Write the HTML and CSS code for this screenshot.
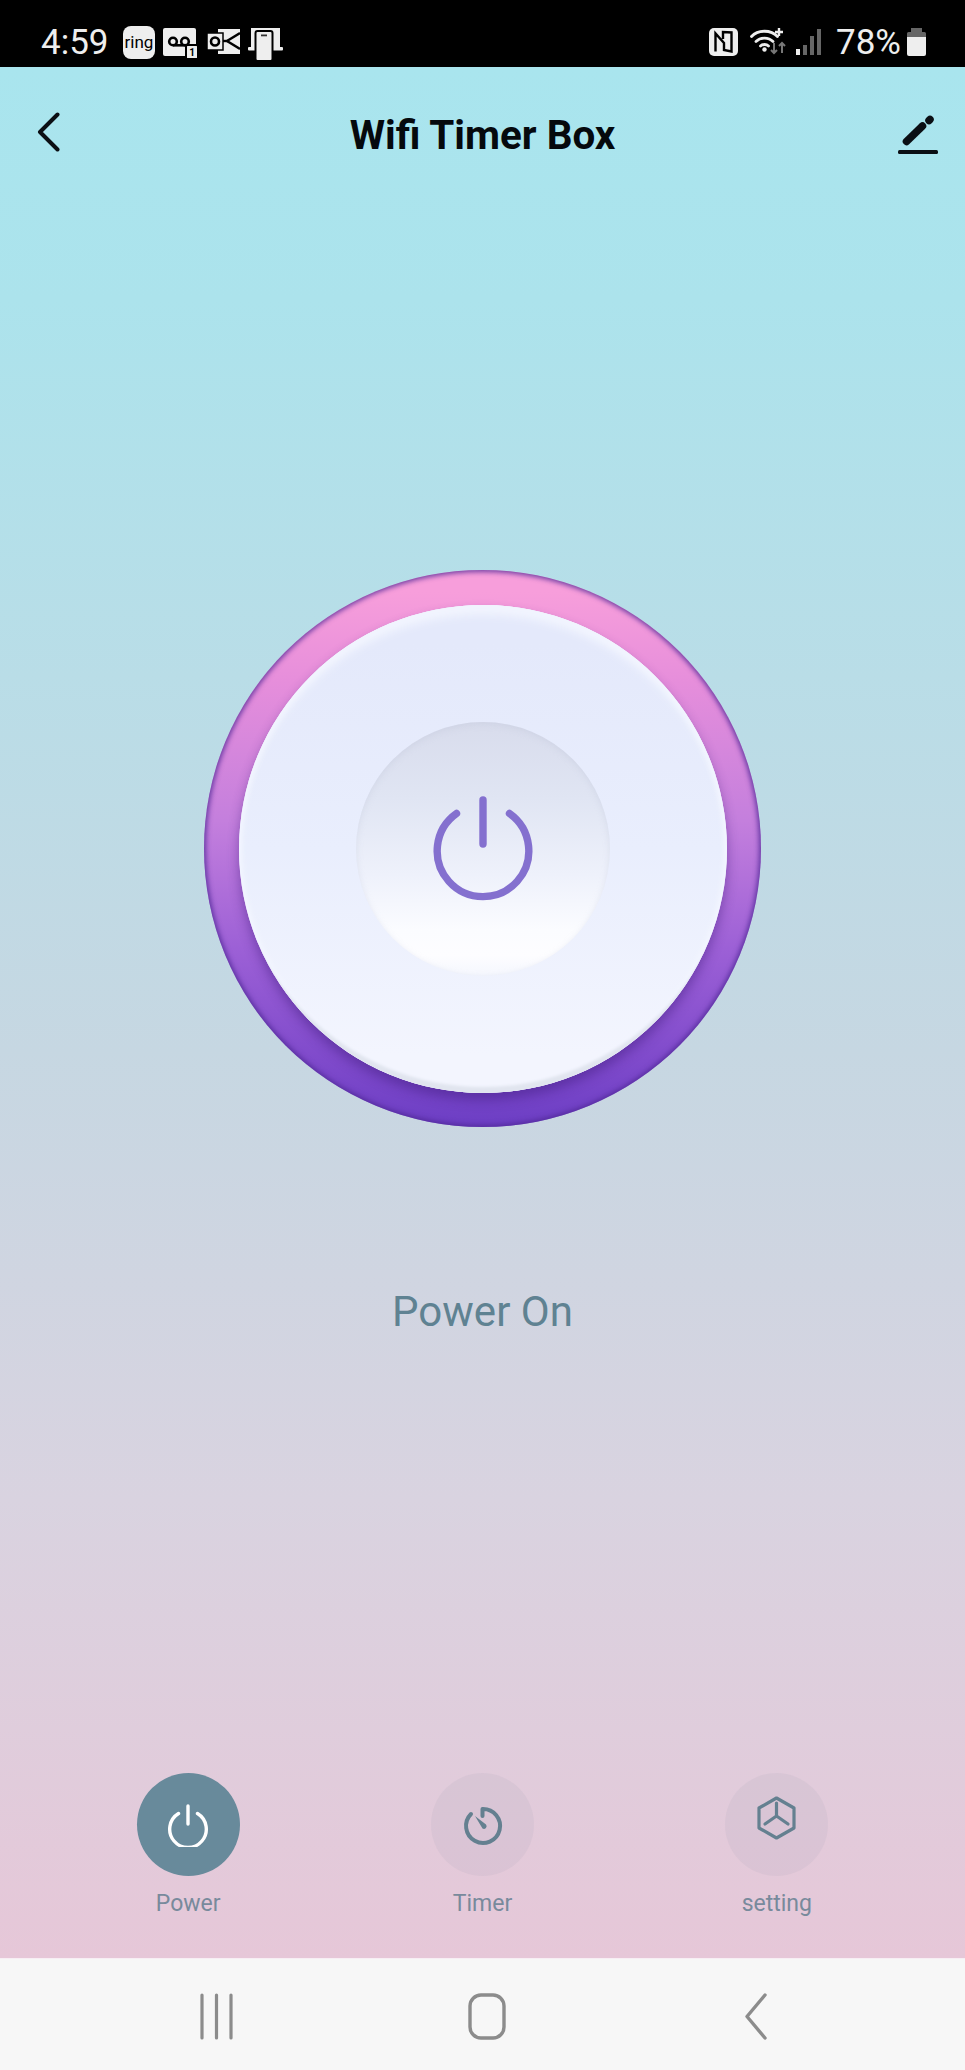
FILE: index.html
```html
<!doctype html>
<html lang="en">
<head>
  <meta charset="UTF-8">
  <title>Wifi Timer Box</title>
  <link rel="stylesheet" href="styles.css">
</head>
<body>
  <div class="app">
    <div class="status-bar">
      <div class="status-group status-left">
        <span class="clock">4:59</span>
        <svg class="st-ring" viewBox="0 0 32 38"><rect y="3" width="32" height="33" rx="8" fill="#eee"/><text class="ring-text" x="16" y="25" text-anchor="middle">ring</text></svg>
        <svg class="st-vm" viewBox="0 0 36 38">
          <rect y="5" width="33" height="28" rx="2" fill="#eee"/>
          <g fill="none" stroke="#000" stroke-width="2.6"><circle cx="10" cy="18.500" r="3.800"/><circle cx="22" cy="18.500" r="3.800"/><path d="M10 22.300H22"/></g>
          <rect x="23" y="22" width="12" height="14" rx="1.500" fill="#eee" stroke="#000" stroke-width="2"/>
          <text class="vm-count" x="29" y="33" text-anchor="middle">1</text>
        </svg>
        <svg class="st-mail" viewBox="0 0 33 38">
          <rect x="11" y="6" width="22" height="25" fill="#eee"/>
          <path d="M33 10L20 18L33 26" fill="none" stroke="#000" stroke-width="2.400"/>
          <path d="M16 18H22" stroke="#000" stroke-width="2.400"/>
          <rect x="0" y="10" width="16" height="17" fill="#eee" stroke="#000" stroke-width="1.500"/>
          <circle cx="8" cy="18.500" r="4" fill="none" stroke="#000" stroke-width="2.600"/>
        </svg>
        <svg class="st-phone" viewBox="0 0 35 38">
          <rect x="3" y="5" width="29" height="21" fill="#eee"/>
          <rect x="0" y="24" width="35" height="3.400" rx="1" fill="#eee"/>
          <rect x="7.500" y="8" width="17" height="30" rx="2" fill="#eee" stroke="#000" stroke-width="2"/>
          <rect x="13" y="11.500" width="6" height="1.800" fill="#333"/>
        </svg>
      </div>
      <div class="status-group status-right">
        <svg class="st-nfc" viewBox="0 0 29 38">
          <rect y="5" width="29" height="28" rx="5" fill="#eee"/>
          <path d="M6.500 28.500V10.500L15 20V27L22.500 28.500V9.500L14 9V16" fill="none" stroke="#000" stroke-width="2.400"/>
        </svg>
        <svg class="st-wifi" viewBox="0 0 36 38">
          <g fill="none" stroke="#eee" stroke-width="2.800" stroke-linecap="round">
            <path d="M1.500 13.500C8 6.500 21 6.500 27.500 13.500"/>
            <path d="M6 18.500C10.500 14 18.500 14 23 18.500"/>
            <path d="M10.500 23C12.500 21 16.500 21 18.500 23"/>
          </g>
          <circle cx="14.500" cy="26.500" r="2.200" fill="#eee"/>
          <path d="M29 5V13M25 9H33" stroke="#eee" stroke-width="2.400"/>
          <g fill="none" stroke="#777" stroke-width="2"><path d="M24 20V30M21 27L24 30L27 27"/><path d="M32 30V20M29 23L32 20L35 23"/></g>
        </svg>
        <svg class="st-signal" viewBox="0 0 26 38">
          <rect x="0" y="26" width="4" height="6" fill="#eee"/>
          <rect x="7" y="22" width="4" height="10" fill="#666"/>
          <rect x="14" y="13" width="4" height="19" fill="#666"/>
          <rect x="21" y="6" width="4" height="26" fill="#666"/>
        </svg>
        <span class="battery-text">78%</span>
        <svg class="st-battery" viewBox="0 0 19 38">
          <path d="M4 5H15V9H17.500A1.500 1.500 0 0 1 19 10.500V14H0V10.500A1.500 1.500 0 0 1 1.500 9H4Z" fill="#666"/>
          <path d="M0 14H19V31A2 2 0 0 1 17 33H2A2 2 0 0 1 0 31Z" fill="#eee"/>
        </svg>
      </div>
    </div>

    <header class="header">
      <svg class="back-icon" viewBox="0 0 23 40"><path d="M20.500 2.500L3 20L20.500 37.500" fill="none" stroke="#0b0f14" stroke-width="4" stroke-linecap="round" stroke-linejoin="round"/></svg>
      <h1 class="title">Wifi Timer Box</h1>
      <svg class="edit-icon" viewBox="0 0 40 40"><g fill="none" stroke="#0b0f14" stroke-width="7.500" stroke-linecap="round"><path d="M8.500 27.500L24.500 12"/><path d="M31 6.500L32 5.500"/></g><rect y="36" width="40" height="4" rx="1.500" fill="#0b0f14"/></svg>
    </header>

    <main class="main">
      <div class="dial">
        <div class="plate">
          <div class="dish">
            <svg class="dish-icon" viewBox="0 0 100 105"><g fill="none" stroke="#8470cf" stroke-width="7.400" stroke-linecap="round"><path d="M23.500 17.500A45.800 45.800 0 1 0 76.500 17.500"/><path d="M50 4V48"/></g></svg>
          </div>
        </div>
      </div>
      <p class="power-state">Power On</p>
    </main>

    <nav class="tabs">
      <div class="tab">
        <div class="tab-circle active">
          <svg class="tab-icon" viewBox="0 0 44 44"><g fill="none" stroke="#fff" stroke-width="3.400" stroke-linecap="round"><path d="M12.500 10.500A18.300 18.300 0 1 0 31.500 10.500"/><path d="M22 3V21"/></g></svg>
        </div>
        <span class="tab-label">Power</span>
      </div>
      <div class="tab">
        <div class="tab-circle">
          <svg class="tab-icon timer" viewBox="0 0 44 44">
            <g fill="none" stroke="#648090" stroke-width="4" stroke-linecap="round" stroke-linejoin="round"><path d="M10 10A17 17 0 1 0 21.500 5V12"/></g>
            <path d="M14 12L25 20.500A2.700 2.700 0 0 1 21.500 24.500Z" fill="#648090"/>
          </svg>
        </div>
        <span class="tab-label">Timer</span>
      </div>
      <div class="tab">
        <div class="tab-circle">
          <svg class="tab-icon setting" viewBox="0 0 44 44"><g fill="none" stroke="#648090" stroke-width="3.200" stroke-linecap="round" stroke-linejoin="round"><path d="M21.500 2L39 12V32L21.500 42L4 32V12Z"/><path d="M21.500 7V20L10 28M21.500 20L33 28"/></g></svg>
        </div>
        <span class="tab-label">setting</span>
      </div>
    </nav>

    <div class="nav-bar">
      <svg class="nav-recent" viewBox="0 0 33 47"><g stroke="#8c8c8c" stroke-width="3.200" stroke-linecap="round"><path d="M2 2V45M16.500 2V45M31 2V45"/></g></svg>
      <svg class="nav-home" viewBox="0 0 38 47"><rect x="2" y="2" width="34" height="43" rx="11" fill="none" stroke="#8c8c8c" stroke-width="3.400"/></svg>
      <svg class="nav-back" viewBox="0 0 22 47"><path d="M20 2L2 23.500L20 45" fill="none" stroke="#8c8c8c" stroke-width="3.400" stroke-linecap="round" stroke-linejoin="round"/></svg>
    </div>
  </div>
</body>
</html>
```

FILE: styles.css
```css
* {
  box-sizing: border-box;
}
html, body {
  margin: 0;
  padding: 0;
}
body {
  font-family: 'Roboto', sans-serif;
  background: #000;
}
.app {
  width: 965px;
  height: 2070px;
  display: flex;
  flex-direction: column;
  overflow: hidden;
  background: linear-gradient(180deg, #a9e5ee 67px, #ace3ec 300px, #c6d7e2 1050px, #d9d3e0 1500px, #e6c7d8 1958px);
}

/* status bar */
.status-bar {
  height: 67px;
  flex: none;
  background: #000;
  color: #eee;
  padding: 17px 39px 0 41px;
  display: flex;
  justify-content: space-between;
  align-items: flex-start;
}
.status-group {
  display: flex;
  align-items: center;
  height: 50px;
}
.status-group svg {
  height: 38px;
  flex: none;
}
.status-left {
  gap: 8px;
}
.clock {
  font-size: 35px;
  line-height: 38px;
  margin: 1px 6px 0 0;
}
.st-ring { width: 32px; }
.st-vm { width: 36px; }
.st-mail { width: 33px; }
.st-phone { width: 35px; }
.st-nfc { width: 29px; margin-right: 12px; }
.st-wifi { width: 36px; margin-right: 10px; }
.st-signal { width: 26px; margin-right: 14px; }
.st-battery { width: 19px; margin-left: 6px; }
.battery-text {
  font-size: 35px;
  line-height: 38px;
  margin-top: 1px;
}
.ring-text {
  font-family: 'Roboto', sans-serif;
  font-size: 17px;
  fill: #000;
}
.vm-count {
  font-family: 'Roboto', sans-serif;
  font-size: 10px;
  font-weight: 700;
  fill: #000;
}

/* header */
.header {
  height: 134px;
  flex: none;
  padding: 0 27px 4px 37px;
  display: grid;
  grid-template-columns: 1fr auto 1fr;
  align-items: center;
}
.back-icon {
  width: 23px;
  height: 40px;
}
.edit-icon {
  width: 40px;
  height: 40px;
  justify-self: end;
  margin-top: 4px;
}
.title {
  margin: 8px 0 0 -10px;
  font-size: 40.4px;
  font-weight: 700;
  line-height: 48px;
  color: #05090d;
}

/* main dial */
.main {
  flex: 1;
  padding-top: 369px;
  display: flex;
  flex-direction: column;
  align-items: center;
}
.dial {
  width: 557px;
  height: 557px;
  flex: none;
  border-radius: 50%;
  display: flex;
  align-items: center;
  justify-content: center;
  background: linear-gradient(180deg, #f79edb 4%, #e68edb 20%, #c47fdd 45%, #9c60d6 68%, #7f4acb 88%, #6c3ec4 100%);
  box-shadow: inset 0 0 5px 2px rgba(80, 40, 150, 0.8);
}
.plate {
  width: 488px;
  height: 488px;
  border-radius: 50%;
  display: flex;
  align-items: center;
  justify-content: center;
  background: linear-gradient(180deg, #e4e9fb 8%, #e9eefd 50%, #f3f5fe 92%);
  box-shadow: 0 7px 12px rgba(60, 25, 120, 0.45), inset 0 16px 8px -6px #f1f4fe, inset 0 -12px 3px -6px #e1e5ef, inset 0 0 5px 3px #f3f6ff;
}
.dish {
  width: 254px;
  height: 254px;
  border-radius: 50%;
  display: flex;
  align-items: center;
  justify-content: center;
  background: linear-gradient(180deg, #d8dcec 0%, #e0e5f3 30%, #eef1fb 60%, #fbfcff 82%, #fdfdff 92%, #f5f7fe 100%);
  box-shadow: inset 0 2px 6px rgba(190, 195, 215, 0.35);
}
.dish-icon {
  width: 100px;
  height: 105px;
}
.power-state {
  margin: 155px 0 0;
  font-size: 42px;
  line-height: 60px;
  color: #5f8292;
}

/* bottom tabs */
.tabs {
  flex: none;
  padding: 0 41px 40px;
  display: grid;
  grid-template-columns: repeat(3, 1fr);
}
.tab {
  display: flex;
  flex-direction: column;
  align-items: center;
  gap: 14px;
}
.tab-circle {
  width: 103px;
  height: 103px;
  border-radius: 50%;
  background: rgba(176, 166, 186, 0.16);
  display: flex;
  align-items: center;
  justify-content: center;
}
.tab-circle.active {
  background: #688a9b;
}
.tab-icon {
  width: 44px;
  height: 44px;
}
.tab-icon.timer {
  margin: 2px 0 0 1px;
}
.tab-icon.setting {
  margin-top: -13px;
}
.tab-label {
  font-size: 23px;
  line-height: 28px;
  color: #788a9c;
}

/* android nav */
.nav-bar {
  height: 112px;
  flex: none;
  background: #f7f7f7;
  border-top: 1px solid #f7eef4;
  padding: 0 198px 0 200px;
  display: flex;
  justify-content: space-between;
  align-items: center;
}
.nav-bar svg {
  height: 47px;
  margin-top: 4px;
}
.nav-recent { width: 33px; }
.nav-home { width: 38px; margin-right: 5px; }
.nav-back { width: 22px; }
```
